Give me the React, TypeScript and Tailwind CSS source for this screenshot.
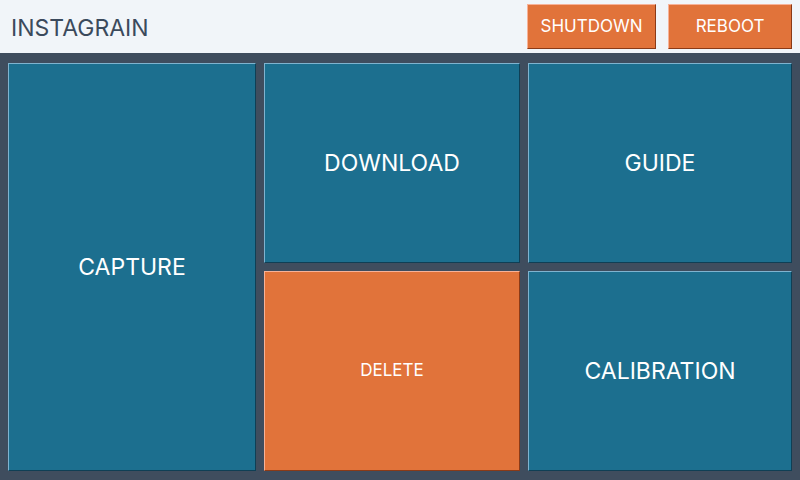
const tile =
  'flex items-center justify-center text-white border border-t-[#7fb3cf] border-l-[#7fb3cf] border-b-[#0f3f55] border-r-[#0f3f55] bg-[#1c6f8f]';
const orange =
  'flex items-center justify-center text-white bg-[#e1733a] border border-t-[#f7b298] border-l-[#f7b298] border-b-[#8a3a17] border-r-[#8a3a17]';

export default function App() {
  return (
    <div className="w-[800px] h-[480px] flex flex-col bg-[#3f4d5e] overflow-hidden font-['Inter',sans-serif]">
      {/* Header */}
      <div className="h-[53px] shrink-0 bg-[#f1f5f9] flex items-center pl-[11px] pr-2">
        <h1 className="text-[23px] text-[#3b4a5c] font-normal pt-[3px]">INSTAGRAIN</h1>
        <div className="ml-auto flex gap-3 self-start pt-1">
          <button className={`${orange} w-[129px] h-[45px] text-[17px] pt-px`}>SHUTDOWN</button>
          <button className={`${orange} w-[124px] h-[45px] text-[17px] pt-px`}>REBOOT</button>
        </div>
      </div>

      {/* Grid */}
      <div className="flex-1 grid grid-cols-[248px_256px_264px] grid-rows-[200px_200px] gap-2 px-2 pt-[10px] pb-[9px]">
        <button className={`${tile} row-span-2 text-[23px]`}>CAPTURE</button>
        <button className={`${tile} text-[23px]`}>DOWNLOAD</button>
        <button className={`${tile} text-[23px]`}>GUIDE</button>
        <button className={`${orange} text-[17px]`}>DELETE</button>
        <button className={`${tile} text-[23px]`}>CALIBRATION</button>
      </div>
    </div>
  );
}
